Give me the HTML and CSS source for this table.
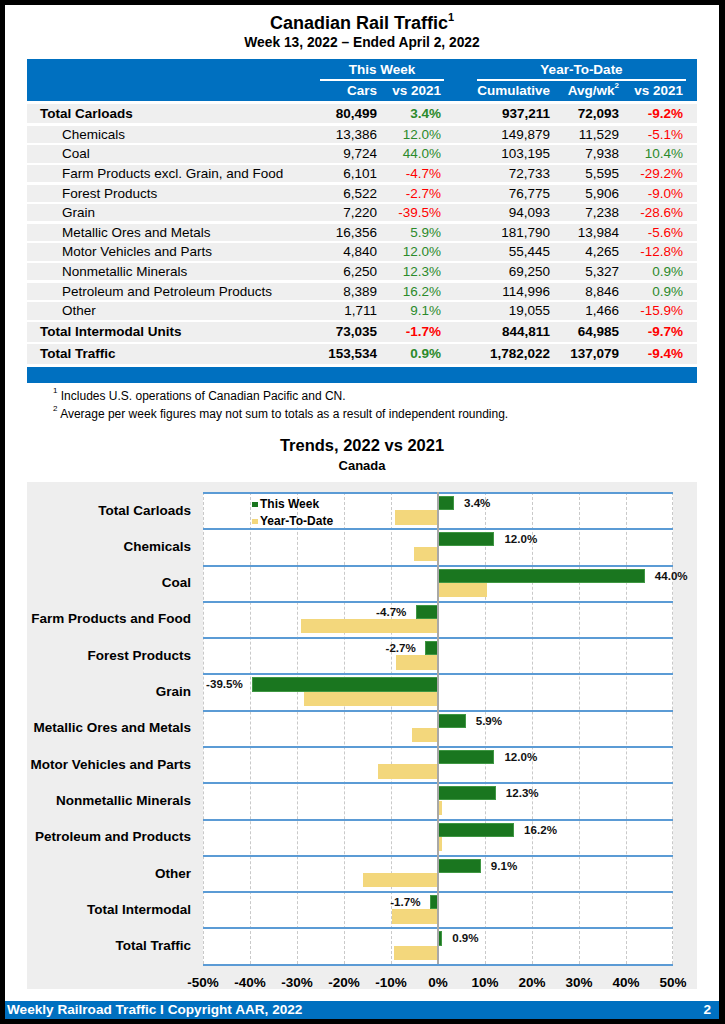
FILE: index.html
```html
<!DOCTYPE html>
<html lang="en">
<head>
<meta charset="utf-8">
<title>Canadian Rail Traffic</title>
<link rel="stylesheet" href="styles.css">
</head>
<body>
<div class="page">
  <h1 class="title">Canadian Rail Traffic<sup>1</sup></h1>
  <div class="subtitle">Week 13, 2022 – Ended April 2, 2022</div>

  <div class="tbl">
    <div class="thead">
      <div class="grp g1">This Week</div>
      <div class="grp g2">Year-To-Date</div>
      <div class="hc c2">Cars</div>
      <div class="hc c3">vs 2021</div>
      <div class="hc c5">Cumulative</div>
      <div class="hc c6">Avg/wk<sup>2</sup></div>
      <div class="hc c7">vs 2021</div>
    </div>
    <div class="rows">
      <div class="row tot first"><div class="lbl">Total Carloads</div><div class="n c2">80,499</div><div class="n c3 pos">3.4%</div><div class="n c5">937,211</div><div class="n c6">72,093</div><div class="n c7 neg">-9.2%</div></div>
      <div class="row"><div class="lbl">Chemicals</div><div class="n c2">13,386</div><div class="n c3 pos">12.0%</div><div class="n c5">149,879</div><div class="n c6">11,529</div><div class="n c7 neg">-5.1%</div></div>
      <div class="row"><div class="lbl">Coal</div><div class="n c2">9,724</div><div class="n c3 pos">44.0%</div><div class="n c5">103,195</div><div class="n c6">7,938</div><div class="n c7 pos">10.4%</div></div>
      <div class="row"><div class="lbl">Farm Products excl. Grain, and Food</div><div class="n c2">6,101</div><div class="n c3 neg">-4.7%</div><div class="n c5">72,733</div><div class="n c6">5,595</div><div class="n c7 neg">-29.2%</div></div>
      <div class="row"><div class="lbl">Forest Products</div><div class="n c2">6,522</div><div class="n c3 neg">-2.7%</div><div class="n c5">76,775</div><div class="n c6">5,906</div><div class="n c7 neg">-9.0%</div></div>
      <div class="row"><div class="lbl">Grain</div><div class="n c2">7,220</div><div class="n c3 neg">-39.5%</div><div class="n c5">94,093</div><div class="n c6">7,238</div><div class="n c7 neg">-28.6%</div></div>
      <div class="row"><div class="lbl">Metallic Ores and Metals</div><div class="n c2">16,356</div><div class="n c3 pos">5.9%</div><div class="n c5">181,790</div><div class="n c6">13,984</div><div class="n c7 neg">-5.6%</div></div>
      <div class="row"><div class="lbl">Motor Vehicles and Parts</div><div class="n c2">4,840</div><div class="n c3 pos">12.0%</div><div class="n c5">55,445</div><div class="n c6">4,265</div><div class="n c7 neg">-12.8%</div></div>
      <div class="row"><div class="lbl">Nonmetallic Minerals</div><div class="n c2">6,250</div><div class="n c3 pos">12.3%</div><div class="n c5">69,250</div><div class="n c6">5,327</div><div class="n c7 pos">0.9%</div></div>
      <div class="row"><div class="lbl">Petroleum and Petroleum Products</div><div class="n c2">8,389</div><div class="n c3 pos">16.2%</div><div class="n c5">114,996</div><div class="n c6">8,846</div><div class="n c7 pos">0.9%</div></div>
      <div class="row"><div class="lbl">Other</div><div class="n c2">1,711</div><div class="n c3 pos">9.1%</div><div class="n c5">19,055</div><div class="n c6">1,466</div><div class="n c7 neg">-15.9%</div></div>
      <div class="row tot"><div class="lbl">Total Intermodal Units</div><div class="n c2">73,035</div><div class="n c3 neg">-1.7%</div><div class="n c5">844,811</div><div class="n c6">64,985</div><div class="n c7 neg">-9.7%</div></div>
      <div class="row tot"><div class="lbl">Total Traffic</div><div class="n c2">153,534</div><div class="n c3 pos">0.9%</div><div class="n c5">1,782,022</div><div class="n c6">137,079</div><div class="n c7 neg">-9.4%</div></div>
      <div class="tfoot"></div>
    </div>
  </div>

  <div class="notes">
    <p><sup>1</sup> Includes U.S. operations of Canadian Pacific and CN.</p>
    <p><sup>2</sup> Average per week figures may not sum to totals as a result of independent rounding.</p>
  </div>

  <h2 class="ctitle">Trends, 2022 vs 2021</h2>
  <div class="csub">Canada</div>

  <div class="chart">
    <div class="clabels">
      <div class="clbl">Total Carloads</div>
      <div class="clbl">Chemicals</div>
      <div class="clbl">Coal</div>
      <div class="clbl">Farm Products and Food</div>
      <div class="clbl">Forest Products</div>
      <div class="clbl">Grain</div>
      <div class="clbl">Metallic Ores and Metals</div>
      <div class="clbl">Motor Vehicles and Parts</div>
      <div class="clbl">Nonmetallic Minerals</div>
      <div class="clbl">Petroleum and Products</div>
      <div class="clbl">Other</div>
      <div class="clbl">Total Intermodal</div>
      <div class="clbl">Total Traffic</div>
    </div>
    <div class="plotwrap">
      <div class="plot">
        <div class="gridlines"><span></span><span></span><span></span><span></span><span></span><span></span><span></span><span></span><span></span><span></span></div>
        <div class="band"><i class="bar tw" style="left:235px;width:15.98px"></i><i class="bar ytd" style="left:191.76px;width:43.24px"></i><b class="val" style="left:261px">3.4%</b></div>
        <div class="band"><i class="bar tw" style="left:235px;width:56.4px"></i><i class="bar ytd" style="left:211.03px;width:23.97px"></i><b class="val" style="left:301.4px">12.0%</b></div>
        <div class="band"><i class="bar tw" style="left:235px;width:206.8px"></i><i class="bar ytd" style="left:235px;width:48.88px"></i><b class="val" style="left:451.8px">44.0%</b></div>
        <div class="band"><i class="bar tw" style="left:212.91px;width:22.09px"></i><i class="bar ytd" style="left:97.76px;width:137.24px"></i><b class="val" style="right:266.6px">-4.7%</b></div>
        <div class="band"><i class="bar tw" style="left:222.31px;width:12.69px"></i><i class="bar ytd" style="left:192.7px;width:42.3px"></i><b class="val" style="right:257.2px">-2.7%</b></div>
        <div class="band"><i class="bar tw" style="left:49.35px;width:185.65px"></i><i class="bar ytd" style="left:100.58px;width:134.42px"></i><b class="val" style="right:430.2px">-39.5%</b></div>
        <div class="band"><i class="bar tw" style="left:235px;width:27.73px"></i><i class="bar ytd" style="left:208.68px;width:26.32px"></i><b class="val" style="left:272.7px">5.9%</b></div>
        <div class="band"><i class="bar tw" style="left:235px;width:56.4px"></i><i class="bar ytd" style="left:174.84px;width:60.16px"></i><b class="val" style="left:301.4px">12.0%</b></div>
        <div class="band"><i class="bar tw" style="left:235px;width:57.81px"></i><i class="bar ytd" style="left:235px;width:4.23px"></i><b class="val" style="left:302.8px">12.3%</b></div>
        <div class="band"><i class="bar tw" style="left:235px;width:76.14px"></i><i class="bar ytd" style="left:235px;width:4.23px"></i><b class="val" style="left:321.1px">16.2%</b></div>
        <div class="band"><i class="bar tw" style="left:235px;width:42.77px"></i><i class="bar ytd" style="left:160.27px;width:74.73px"></i><b class="val" style="left:287.8px">9.1%</b></div>
        <div class="band"><i class="bar tw" style="left:227.01px;width:7.99px"></i><i class="bar ytd" style="left:189.41px;width:45.59px"></i><b class="val" style="right:252.5px">-1.7%</b></div>
        <div class="band"><i class="bar tw" style="left:235px;width:4.23px"></i><i class="bar ytd" style="left:190.82px;width:44.18px"></i><b class="val" style="left:249.2px">0.9%</b></div>
        <div class="zero"></div>
        <div class="legend">
          <div class="lg"><span class="sw sw-tw"></span>This Week</div>
          <div class="lg"><span class="sw sw-ytd"></span>Year-To-Date</div>
        </div>
      </div>
      <div class="axis">
        <span>-50%</span><span>-40%</span><span>-30%</span><span>-20%</span><span>-10%</span><span>0%</span><span>10%</span><span>20%</span><span>30%</span><span>40%</span><span>50%</span>
      </div>
    </div>
  </div>

  <div class="footer"><span>Weekly Railroad Traffic I Copyright AAR, 2022</span><span>2</span></div>
</div>
</body>
</html>
```

FILE: styles.css
```css
* { box-sizing: border-box; margin: 0; padding: 0; }

html, body { background: #000; }

body {
  width: 725px;
  height: 1024px;
  padding: 5px 6px 5px 5px;
  font-family: "Liberation Sans", Arial, sans-serif;
  color: #000;
}

.page {
  background: #fff;
  width: 714px;
  height: 1014px;
  display: flex;
  flex-direction: column;
}

.title {
  font-size: 18px;
  line-height: 22px;
  font-weight: 700;
  text-align: center;
  margin-top: 6.5px;
}
.title sup {
  font-size: 11px;
  line-height: 11px;
  vertical-align: top;
}

.subtitle {
  font-size: 13.8px;
  line-height: 18px;
  font-weight: 700;
  text-align: center;
}

/* ---------- table ---------- */
.tbl {
  margin: 7.5px 22px 0 22px;
  width: 670px;
  font-size: 13.5px;
}

.thead, .row {
  display: grid;
  grid-template-columns: 293px 60px 64px 33px 76px 69px 64px 11px;
}

.thead {
  background: #0070c0;
  color: #fff;
  font-weight: 700;
  height: 42px;
  grid-template-rows: 22.3px 19.7px;
}

.grp {
  grid-row: 1;
  text-align: center;
  line-height: 18px;
  padding-top: 2.3px;
  border-bottom: 2px solid #fff;
}
.g1 { grid-column: 2 / 4; }
.g2 { grid-column: 5 / 8; }

.hc {
  grid-row: 2;
  text-align: right;
  padding-right: 3px;
  line-height: 18px;
  padding-top: 0.8px;
  white-space: nowrap;
}
.hc sup {
  font-size: 8px;
  line-height: 8px;
  vertical-align: top;
  position: relative;
}

.c2 { grid-column: 2; }
.c3 { grid-column: 3; }
.c5 { grid-column: 5; }
.c6 { grid-column: 6; }
.c7 { grid-column: 7; }

.rows {
  display: flex;
  flex-direction: column;
  gap: 2.33px;
  padding-top: 3px;
}

.row {
  background: #efefef;
  height: 17.3px;
  line-height: 17.3px;
  white-space: nowrap;
}
.row.tot { font-weight: 700; height: 20px; line-height: 20px; }
.row.first { height: 19.3px; line-height: 19.3px; }

.lbl { grid-column: 1; padding-left: 35px; }
.tot .lbl { padding-left: 13px; }

.n { text-align: right; padding-right: 3px; }
.pos { color: #2b8a2b; }
.neg { color: #ff0000; }

.tfoot { height: 16px; background: #0070c0; }

/* ---------- notes ---------- */
.notes {
  margin: 4.5px 0 0 48px;
  font-size: 12px;
  line-height: 18px;
}
.notes sup {
  font-size: 8px;
  line-height: 8px;
  vertical-align: top;
}

.ctitle {
  font-size: 16.5px;
  line-height: 20px;
  font-weight: 700;
  text-align: center;
  margin-top: 12.3px;
}
.csub {
  font-size: 13px;
  line-height: 16px;
  font-weight: 700;
  text-align: center;
  margin-top: 2.9px;
}

/* ---------- chart ---------- */
.chart {
  margin: 7.7px 22px 0 22px;
  width: 670px;
  height: 507px;
  background: #eeeeee;
  padding-top: 10px;
  display: grid;
  grid-template-columns: 164px 470px;
  column-gap: 12px;
  align-items: start;
}

.clabels { display: flex; flex-direction: column; }
.clbl {
  height: 36.3px;
  display: flex;
  align-items: center;
  justify-content: flex-end;
  font-size: 13.5px;
  font-weight: 700;
  white-space: nowrap;
}

.plot {
  position: relative;
  width: 470px;
  background: #fff;
  border-bottom: 2px solid #5b9bd5;
}

.gridlines {
  position: absolute;
  inset: 0;
  display: flex;
}
.gridlines span {
  width: 47px;
  height: 100%;
  border-left: 1px dashed #c9c9c9;
}
.gridlines span:last-child { border-right: 1px dashed #c9c9c9; }

.band {
  position: relative;
  height: 36.3px;
  border-top: 2px solid #5b9bd5;
}

.bar { position: absolute; display: block; }
.bar.tw {
  top: 2px;
  height: 14.2px;
  background: #1a761f;
  border: 1px solid #3f9743;
}
.bar.ytd {
  top: 16.3px;
  height: 14.3px;
  background: #f3d77c;
}

.val {
  position: absolute;
  top: 2px;
  line-height: 14px;
  font-size: 11.6px;
  font-weight: 700;
  color: #111;
  white-space: nowrap;
}

.zero {
  position: absolute;
  top: 0;
  bottom: 0;
  left: 234.3px;
  width: 1.5px;
  background: #a8a8a8;
  z-index: 2;
}

.legend {
  position: absolute;
  left: 49.3px;
  top: 4px;
  z-index: 3;
  font-size: 12px;
  font-weight: 700;
  line-height: 17px;
}
.lg { display: flex; align-items: center; white-space: nowrap; }
.sw { width: 5.4px; height: 5.4px; margin-right: 2.3px; display: block; }
.sw-tw { background: #1a761f; }
.sw-ytd { background: #f3d77c; }

.axis {
  display: grid;
  grid-template-columns: repeat(11, 47px);
  width: 517px;
  margin-left: -23.5px;
  margin-top: 9px;
  font-size: 13.5px;
  font-weight: 700;
  line-height: 16px;
  text-align: center;
}

/* ---------- footer ---------- */
.footer {
  margin-top: auto;
  height: 18px;
  background: #0070c0;
  color: #fff;
  font-size: 13.6px;
  font-weight: 700;
  line-height: 18px;
  display: flex;
  justify-content: space-between;
  padding: 0 8px 0 2px;
  white-space: nowrap;
}
```
